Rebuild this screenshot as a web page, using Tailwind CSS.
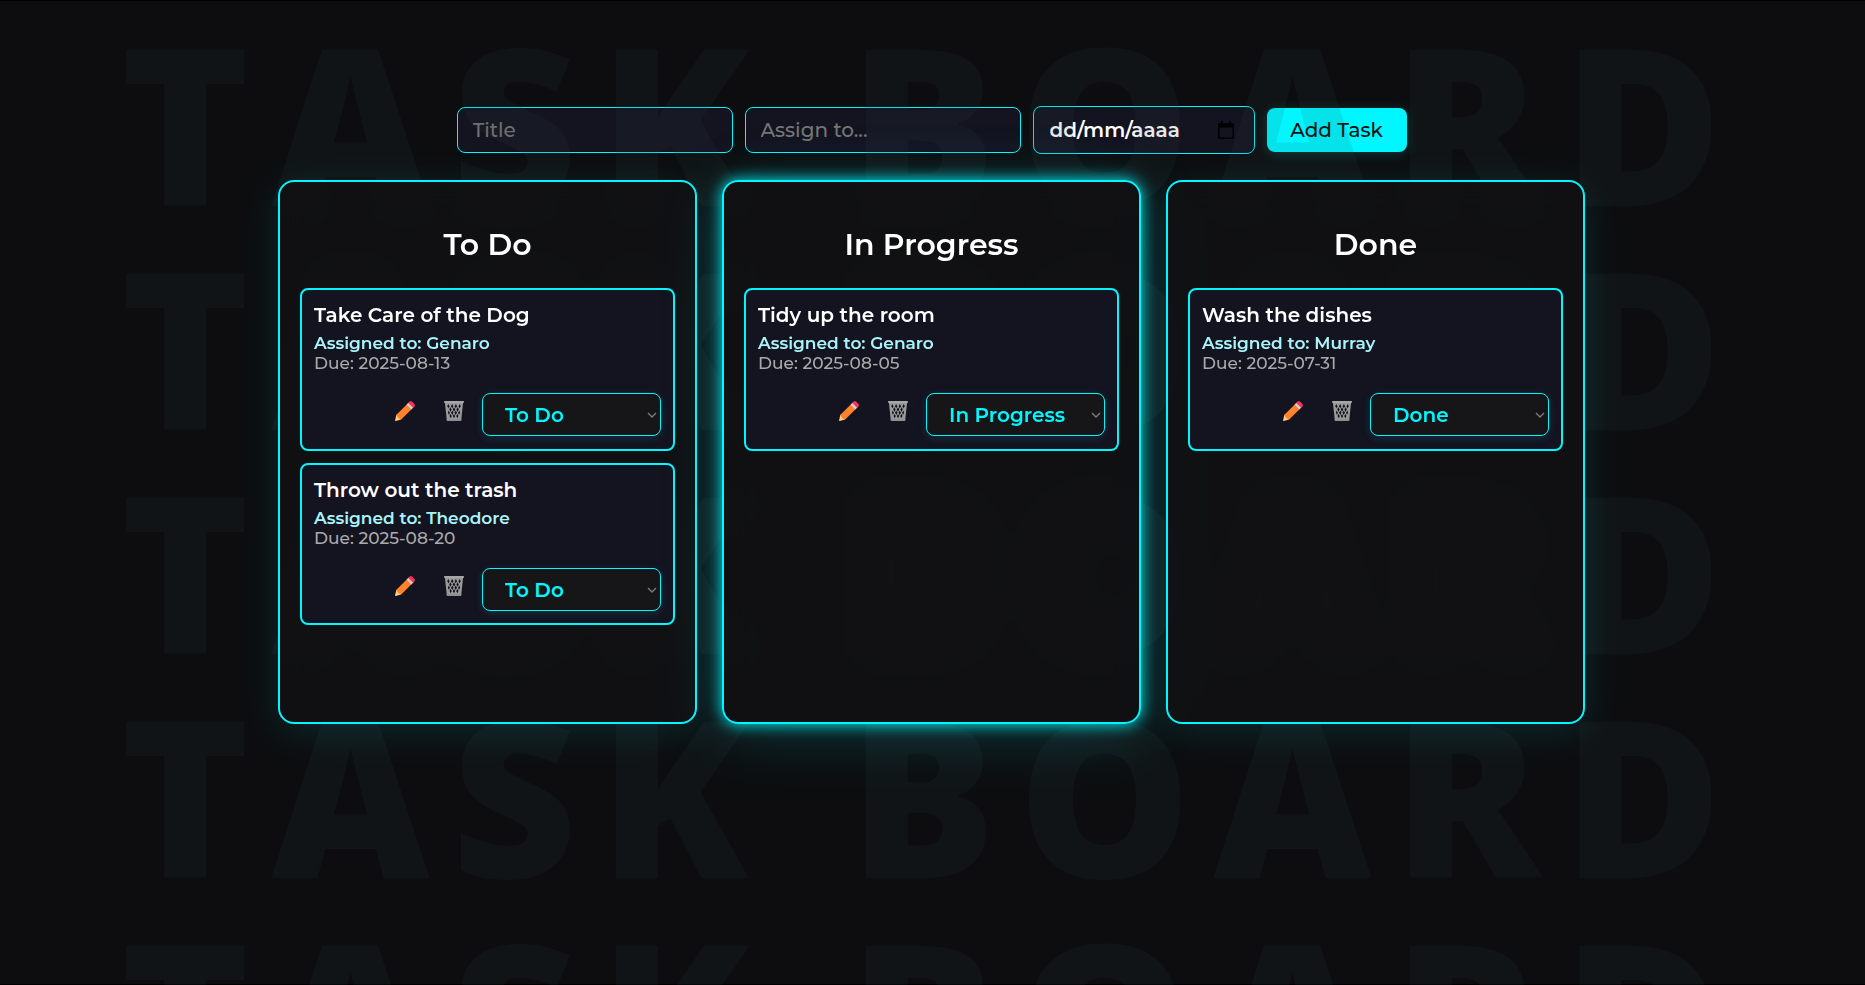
<!DOCTYPE html>
<html lang="en">
<head>
<meta charset="utf-8">
<title>Task Board</title>
<script src="https://cdn.jsdelivr.net/npm/@tailwindcss/browser@4"></script>
</head>
<body class="min-h-screen overflow-hidden border-y border-black bg-[#0d0d0f] font-['Montserrat','Inter',sans-serif] text-xl font-medium text-white">

<svg class="hidden" aria-hidden="true">
  <symbol id="pencil" viewBox="0 0 20 20">
    <path d="M1.4 13.6 6 18.4.8 19.9Q-.1 20.100 .1 19.200Z" fill="#ffce7c"/>
    <path d="M1.400 13.700 12 3.200 16.800 8 6.200 18.500Q4.900 19 4.500 17.600 2.800 17.300 2.400 15.500 1 15 1.400 13.700Z" fill="#ff822d"/>
    <path d="M11.600 3.600 13.800 1.400 18.600 6.200 16.400 8.400Z" fill="#d3d3d3"/>
    <path d="M13.200 2 14.600 .6Q15.800-.4 17 .6L19.400 3Q20.400 4.200 19.400 5.400L18 6.800Z" fill="#f8315f"/>
  </symbol>
  <symbol id="trash" viewBox="0 0 20 20">
    <path d="M.9 1.500H19.100L17.200 19H2.800Z" fill="#9b9b9b"/>
    <path d="M4.200 3 5.600 5.200 4.600 7.200 3.200 5.200ZM8.100 3 9.400 5.200 8.200 7.200 6.900 5.200ZM11.900 3 13.100 5.200 11.800 7.200 10.600 5.200ZM15.800 3 16.800 5.200 15.400 7.200 14.400 5.200ZM6.300 6.300 7.600 8.500 6.500 10.700 5.200 8.500ZM10 6.300 11.300 8.500 10 10.700 8.700 8.500ZM13.700 6.300 14.800 8.500 13.500 10.700 12.400 8.500ZM4.700 9.600 5.900 11.800 5 14 3.900 11.800ZM8.200 9.600 9.500 11.800 8.300 14 7 11.800ZM11.800 9.600 13 11.800 11.700 14 10.500 11.800ZM15.300 9.600 16.100 11.800 15 14 14.100 11.800ZM6.600 12.900 7.800 15.100 6.700 17.200 5.500 15.100ZM10 12.900 11.200 15.100 10 17.200 8.800 15.100ZM13.400 12.900 14.500 15.100 13.300 17.200 12.200 15.100Z" fill="#141320"/>
    <path d="M.8 0H19.200Q20 0 20 .8V1.200Q20 2 19.200 2H.8Q0 2 0 1.200V.8Q0 0 .8 0Z" fill="#a6a6a6"/>
    <path d="M2.600 17.800H17.400V19.200Q17.400 20 16.600 20H3.400Q2.600 20 2.600 19.200Z" fill="#8f8f8f"/>
  </symbol>
  <symbol id="chevron" viewBox="0 0 10 6">
    <path d="M1 1 5 5 9 1" fill="none" stroke="#7d7d80" stroke-width="1.300"/>
  </symbol>
</svg>

<main class="pt-[105px] pr-0.5">
  <form class="flex items-center justify-center gap-3">
    <input aria-label="Title" placeholder="Title" class="h-[46px] w-[276px] rounded-lg border border-[#00f7ff] bg-[#141320] px-[15px] placeholder:text-[#757575]">
    <input aria-label="Assign to" placeholder="Assign to..." class="h-[46px] w-[276px] rounded-lg border border-[#00f7ff] bg-[#141320] px-[15px] placeholder:text-[#757575]">
    <div class="flex h-12 w-[222px] items-center rounded-lg border border-[#00f7ff] bg-[#141320] pr-5 pl-4">
      <input aria-label="Due date" placeholder="dd/mm/aaaa" class="w-full min-w-0 flex-1 font-semibold placeholder:text-white">
      <button type="button" aria-label="Open calendar">
        <svg class="block h-[18px] w-4" viewBox="0 0 16 18" fill="#000"><path fill-rule="evenodd" d="M3 0H4.600V2H11.400V0H13V2H14.400Q16 2 16 3.600V16.400Q16 18 14.400 18H1.600Q0 18 0 16.400V3.600Q0 2 1.600 2H3ZM1.600 6.400V16.400H14.400V6.400Z"/></svg>
      </button>
    </div>
    <button type="submit" class="h-11 w-[140px] rounded-lg bg-[#00f7ff] text-[#111] shadow-[0_2px_12px_#00f7ff33]">Add Task</button>
  </form>

  <div aria-hidden="true" class="pointer-events-none fixed inset-0 overflow-hidden pt-2.5 text-center font-['Open_Sans',sans-serif] text-[218px] leading-[224px] font-extrabold tracking-[0.1em] whitespace-nowrap text-[#35484a]/12">
    <div>TASK BOARD</div>
    <div>TASK BOARD</div>
    <div>TASK BOARD</div>
    <div>TASK BOARD</div>
    <div>TASK BOARD</div>
  </div>

  <div class="relative mx-auto mt-[26px] grid w-full max-w-[1307px] grid-cols-3 gap-[25px]">
    <section class="min-h-[544px] rounded-2xl border-2 border-[#00f7ff] bg-[#121214]/85 p-5 shadow-[0_8px_40px_#00f7ff1f] backdrop-blur-lg">
      <h2 class="my-6 text-center text-3xl leading-[38px] font-semibold">To Do</h2>
      <div class="flex flex-col gap-3">
        <article class="rounded-lg border-2 border-[#00f7ff] bg-[#141320] p-3 pb-[13px]">
          <h3 class="leading-[26px] font-semibold">Take Care of the Dog</h3>
          <p class="mt-[5px] text-[17px] leading-5 font-semibold text-[#a8f4f8]">Assigned to: Genaro</p>
          <p class="text-[17px] leading-5 text-[#aaa]">Due: 2025-08-13</p>
          <div class="mt-5 flex items-start justify-end gap-[7px]">
            <button aria-label="Edit" class="flex h-9 w-[42px] items-center justify-center"><svg class="size-5"><use href="#pencil"/></svg></button>
            <button aria-label="Delete" class="flex h-9 w-[42px] items-center justify-center"><svg class="size-5"><use href="#trash"/></svg></button>
            <div class="relative w-[179px]">
              <select aria-label="Status" class="block h-[43px] w-full appearance-none rounded-lg border border-[#00f7ff] bg-[#161619] pl-[22px] font-semibold text-[#00f7ff] shadow-[0_2px_8px_#00f7ff22]"><option selected>To Do</option><option>In Progress</option><option>Done</option></select>
              <svg class="pointer-events-none absolute top-[19px] right-1 h-1.5 w-2.5"><use href="#chevron"/></svg>
            </div>
          </div>
        </article>
        <article class="rounded-lg border-2 border-[#00f7ff] bg-[#141320] p-3">
          <h3 class="leading-[26px] font-semibold">Throw out the trash</h3>
          <p class="mt-[5px] text-[17px] leading-5 font-semibold text-[#a8f4f8]">Assigned to: Theodore</p>
          <p class="text-[17px] leading-5 text-[#aaa]">Due: 2025-08-20</p>
          <div class="mt-5 flex items-start justify-end gap-[7px]">
            <button aria-label="Edit" class="flex h-9 w-[42px] items-center justify-center"><svg class="size-5"><use href="#pencil"/></svg></button>
            <button aria-label="Delete" class="flex h-9 w-[42px] items-center justify-center"><svg class="size-5"><use href="#trash"/></svg></button>
            <div class="relative w-[179px]">
              <select aria-label="Status" class="block h-[43px] w-full appearance-none rounded-lg border border-[#00f7ff] bg-[#161619] pl-[22px] font-semibold text-[#00f7ff] shadow-[0_2px_8px_#00f7ff22]"><option selected>To Do</option><option>In Progress</option><option>Done</option></select>
              <svg class="pointer-events-none absolute top-[19px] right-1 h-1.5 w-2.5"><use href="#chevron"/></svg>
            </div>
          </div>
        </article>
      </div>
    </section>

    <section class="min-h-[544px] rounded-2xl border-2 border-[#00f7ff] bg-[#121214]/85 p-5 shadow-[0_0_16px_#00f7ff,0_8px_64px_#00f7ff33] backdrop-blur-lg">
      <h2 class="my-6 text-center text-3xl leading-[38px] font-semibold">In Progress</h2>
      <article class="rounded-lg border-2 border-[#00f7ff] bg-[#141320] p-3 pb-[13px]">
        <h3 class="leading-[26px] font-semibold">Tidy up the room</h3>
        <p class="mt-[5px] text-[17px] leading-5 font-semibold text-[#a8f4f8]">Assigned to: Genaro</p>
        <p class="text-[17px] leading-5 text-[#aaa]">Due: 2025-08-05</p>
        <div class="mt-5 flex items-start justify-end gap-[7px]">
          <button aria-label="Edit" class="flex h-9 w-[42px] items-center justify-center"><svg class="size-5"><use href="#pencil"/></svg></button>
          <button aria-label="Delete" class="flex h-9 w-[42px] items-center justify-center"><svg class="size-5"><use href="#trash"/></svg></button>
          <div class="relative w-[179px]">
            <select aria-label="Status" class="block h-[43px] w-full appearance-none rounded-lg border border-[#00f7ff] bg-[#161619] pl-[22px] font-semibold text-[#00f7ff] shadow-[0_2px_8px_#00f7ff22]"><option>To Do</option><option selected>In Progress</option><option>Done</option></select>
            <svg class="pointer-events-none absolute top-[19px] right-1 h-1.5 w-2.5"><use href="#chevron"/></svg>
          </div>
        </div>
      </article>
    </section>

    <section class="min-h-[544px] rounded-2xl border-2 border-[#00f7ff] bg-[#121214]/85 p-5 shadow-[0_8px_40px_#00f7ff1f] backdrop-blur-lg">
      <h2 class="my-6 text-center text-3xl leading-[38px] font-semibold">Done</h2>
      <article class="rounded-lg border-2 border-[#00f7ff] bg-[#141320] p-3 pb-[13px]">
        <h3 class="leading-[26px] font-semibold">Wash the dishes</h3>
        <p class="mt-[5px] text-[17px] leading-5 font-semibold text-[#a8f4f8]">Assigned to: Murray</p>
        <p class="text-[17px] leading-5 text-[#aaa]">Due: 2025-07-31</p>
        <div class="mt-5 flex items-start justify-end gap-[7px]">
          <button aria-label="Edit" class="flex h-9 w-[42px] items-center justify-center"><svg class="size-5"><use href="#pencil"/></svg></button>
          <button aria-label="Delete" class="flex h-9 w-[42px] items-center justify-center"><svg class="size-5"><use href="#trash"/></svg></button>
          <div class="relative w-[179px]">
            <select aria-label="Status" class="block h-[43px] w-full appearance-none rounded-lg border border-[#00f7ff] bg-[#161619] pl-[22px] font-semibold text-[#00f7ff] shadow-[0_2px_8px_#00f7ff22]"><option>To Do</option><option>In Progress</option><option selected>Done</option></select>
            <svg class="pointer-events-none absolute top-[19px] right-1 h-1.5 w-2.5"><use href="#chevron"/></svg>
          </div>
        </div>
      </article>
    </section>
  </div>
</main>
</body>
</html>
